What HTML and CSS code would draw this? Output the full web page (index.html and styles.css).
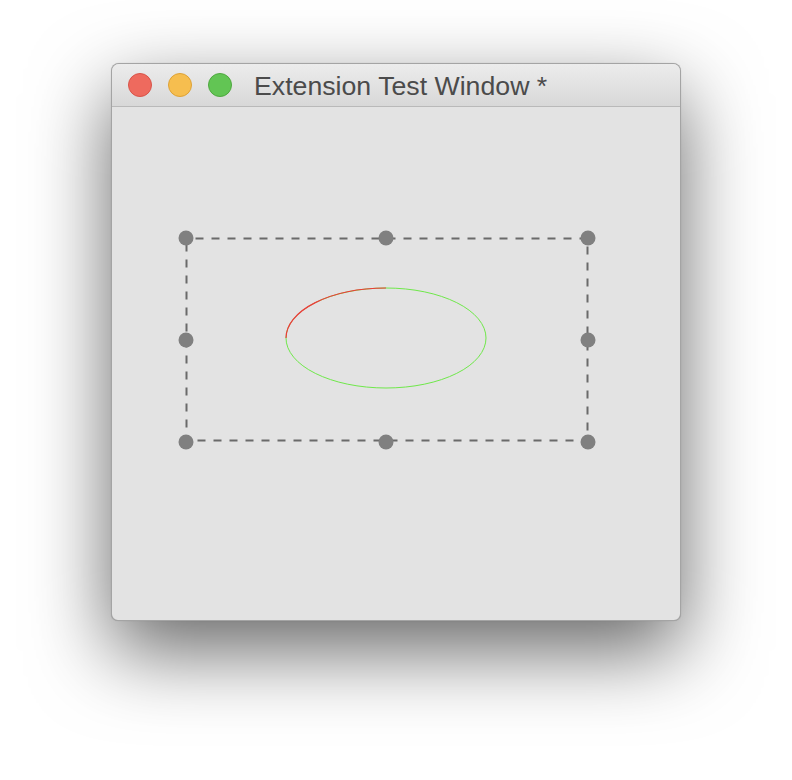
FILE: index.html
```html
<!DOCTYPE html>
<html>
<head>
<meta charset="utf-8">
<link rel="stylesheet" href="styles.css">
</head>
<body>
<div class="window">
  <div class="titlebar">
    <div class="lights">
      <span class="light red"></span>
      <span class="light yellow"></span>
      <span class="light green"></span>
    </div>
    <div class="title">Extension Test Window *</div>
  </div>
  <div class="content">
    <svg class="canvas" width="568" height="513" viewBox="0 0 568 513">
      <rect x="74.5" y="131.5" width="401" height="202" fill="none" stroke="#6a6a6a" stroke-width="2" stroke-dasharray="8 8" stroke-dashoffset="-9"/>
      <ellipse cx="274" cy="231" rx="100" ry="50" fill="none" stroke="#6fe84a" stroke-width="1"/>
      <path d="M174 231 A100 50 0 0 1 274 181" fill="none" stroke="#ee3a3a" stroke-width="1.2"/>
      <g fill="#808080">
        <circle cx="74" cy="131" r="7.5"/>
        <circle cx="274" cy="131" r="7.5"/>
        <circle cx="476" cy="131" r="7.5"/>
        <circle cx="74" cy="233" r="7.5"/>
        <circle cx="476" cy="233" r="7.5"/>
        <circle cx="74" cy="335" r="7.5"/>
        <circle cx="274" cy="335" r="7.5"/>
        <circle cx="476" cy="335" r="7.5"/>
      </g>
    </svg>
  </div>
</div>
</body>
</html>
```

FILE: styles.css
```css
html, body {
  margin: 0;
  padding: 0;
  background: #ffffff;
}
body {
  padding-top: 63px;
  height: 780px;
  box-sizing: border-box;
  overflow: hidden;
}
.window {
  width: 570px;
  height: 558px;
  margin: 0 0 0 111px;
  box-sizing: border-box;
  border: 1px solid rgba(0, 0, 0, 0.28);
  border-radius: 8px 8px 7px 7px;
  background: #e3e3e3;
  box-shadow: 0 30px 80px rgba(0, 0, 0, 0.6), 0 0 1px rgba(0,0,0,0.2);
  overflow: hidden;
  display: flex;
  flex-direction: column;
}
.titlebar {
  height: 42px;
  flex: 0 0 42px;
  border-bottom: 1px solid #b9b9b9;
  background: linear-gradient(to bottom, #ececec, #d8d8d8);
  display: flex;
  align-items: center;
  padding-left: 16px;
}
.lights {
  display: flex;
  gap: 16px;
}
.light {
  width: 24px;
  height: 24px;
  border-radius: 50%;
  box-sizing: border-box;
  display: block;
}
.red { background: #ee6a5e; border: 1px solid #d85449; }
.yellow { background: #f6be4f; border: 1px solid #dea236; }
.green { background: #62c554; border: 1px solid #4fa83f; }
.title {
  margin-left: 22px;
  padding-top: 3px;
  font-family: "Liberation Sans", Arial, sans-serif;
  font-size: 26.7px;
  color: #4b4b4b;
  white-space: nowrap;
}
.content {
  flex: 1;
  position: relative;
}
.canvas {
  display: block;
}
```
